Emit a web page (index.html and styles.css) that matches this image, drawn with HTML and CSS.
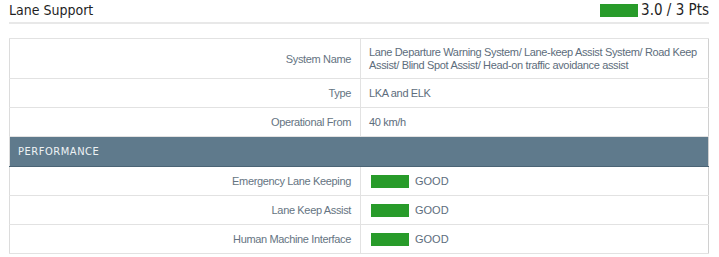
FILE: index.html
```html
<!DOCTYPE html>
<html>
<head>
<meta charset="utf-8">
<link rel="stylesheet" href="styles.css">
</head>
<body>
<div class="panel">
  <div class="head">
    <h2 class="title">Lane Support</h2>
    <div class="score"><span class="bar"></span><span>3.0 / 3 Pts</span></div>
  </div>
  <table class="grid">
    <tr class="first"><td class="lbl">System Name</td><td class="val">Lane Departure Warning System/ Lane-keep Assist System/ Road Keep Assist/ Blind Spot Assist/ Head-on traffic avoidance assist</td></tr>
    <tr><td class="lbl">Type</td><td class="val">LKA and ELK</td></tr>
    <tr><td class="lbl">Operational From</td><td class="val">40 km/h</td></tr>
    <tr class="section"><td colspan="2">PERFORMANCE</td></tr>
    <tr><td class="lbl">Emergency Lane Keeping</td><td class="val"><span class="rating"><span class="bar"></span>GOOD</span></td></tr>
    <tr><td class="lbl">Lane Keep Assist</td><td class="val"><span class="rating"><span class="bar"></span>GOOD</span></td></tr>
    <tr><td class="lbl">Human Machine Interface</td><td class="val"><span class="rating"><span class="bar"></span>GOOD</span></td></tr>
  </table>
</div>
</body>
</html>
```
FILE: styles.css
```css
html, body { margin: 0; padding: 0; background: #fff; }
body { padding: 0 10px 0 9px; }
.panel { width: 700px; }
.head {
  display: flex;
  justify-content: space-between;
  align-items: center;
  border-bottom: 2px solid #e8e8e8;
  box-sizing: border-box;
  height: 24px;
  padding-bottom: 2px;
}
.title {
  margin: 0;
  font: normal 14px/16px "DejaVu Sans Condensed", "DejaVu Sans", sans-serif;
  color: #1f1f1f;
}
.score {
  display: flex;
  align-items: center;
  gap: 3px;
  font: normal 15px/16px "DejaVu Sans Condensed", "DejaVu Sans", sans-serif;
  color: #1f1f1f;
}
.bar { display: inline-block; width: 38px; height: 13px; background: #289b2a; }
.grid {
  margin-top: 14px;
  width: 700px;
  border-collapse: collapse;
  border-left: 1px solid #dcdcdc;
  border-right: 1px solid #d0d0d0;
  font: 11px/13px "Liberation Sans", Arial, sans-serif;
  letter-spacing: -0.35px;
  color: #5d6d7c;
}
.grid td { border-top: 1px solid #e2e2e2; border-bottom: 1px solid #e2e2e2; padding: 8px 9px 7px; vertical-align: middle; }
.grid .lbl { width: 332px; text-align: right; border-right: 1px solid #e2e2e2; color: #657482; }
.grid .val { padding-left: 8px; }
.grid .first td { padding-top: 7px; padding-bottom: 6px; }
.section td {
  background: #5f7a8c;
  color: #eef2f5;
  border-bottom: 1px solid #4b6475;
  font: 11px/13px "DejaVu Sans Condensed", "DejaVu Sans", sans-serif;
  letter-spacing: 0.55px;
  padding: 8px 8px 8px;
}
.rating { display: flex; align-items: center; gap: 6px; letter-spacing: 0; }
.rating .bar { width: 38px; height: 13px; margin-left: 2px; }
```
